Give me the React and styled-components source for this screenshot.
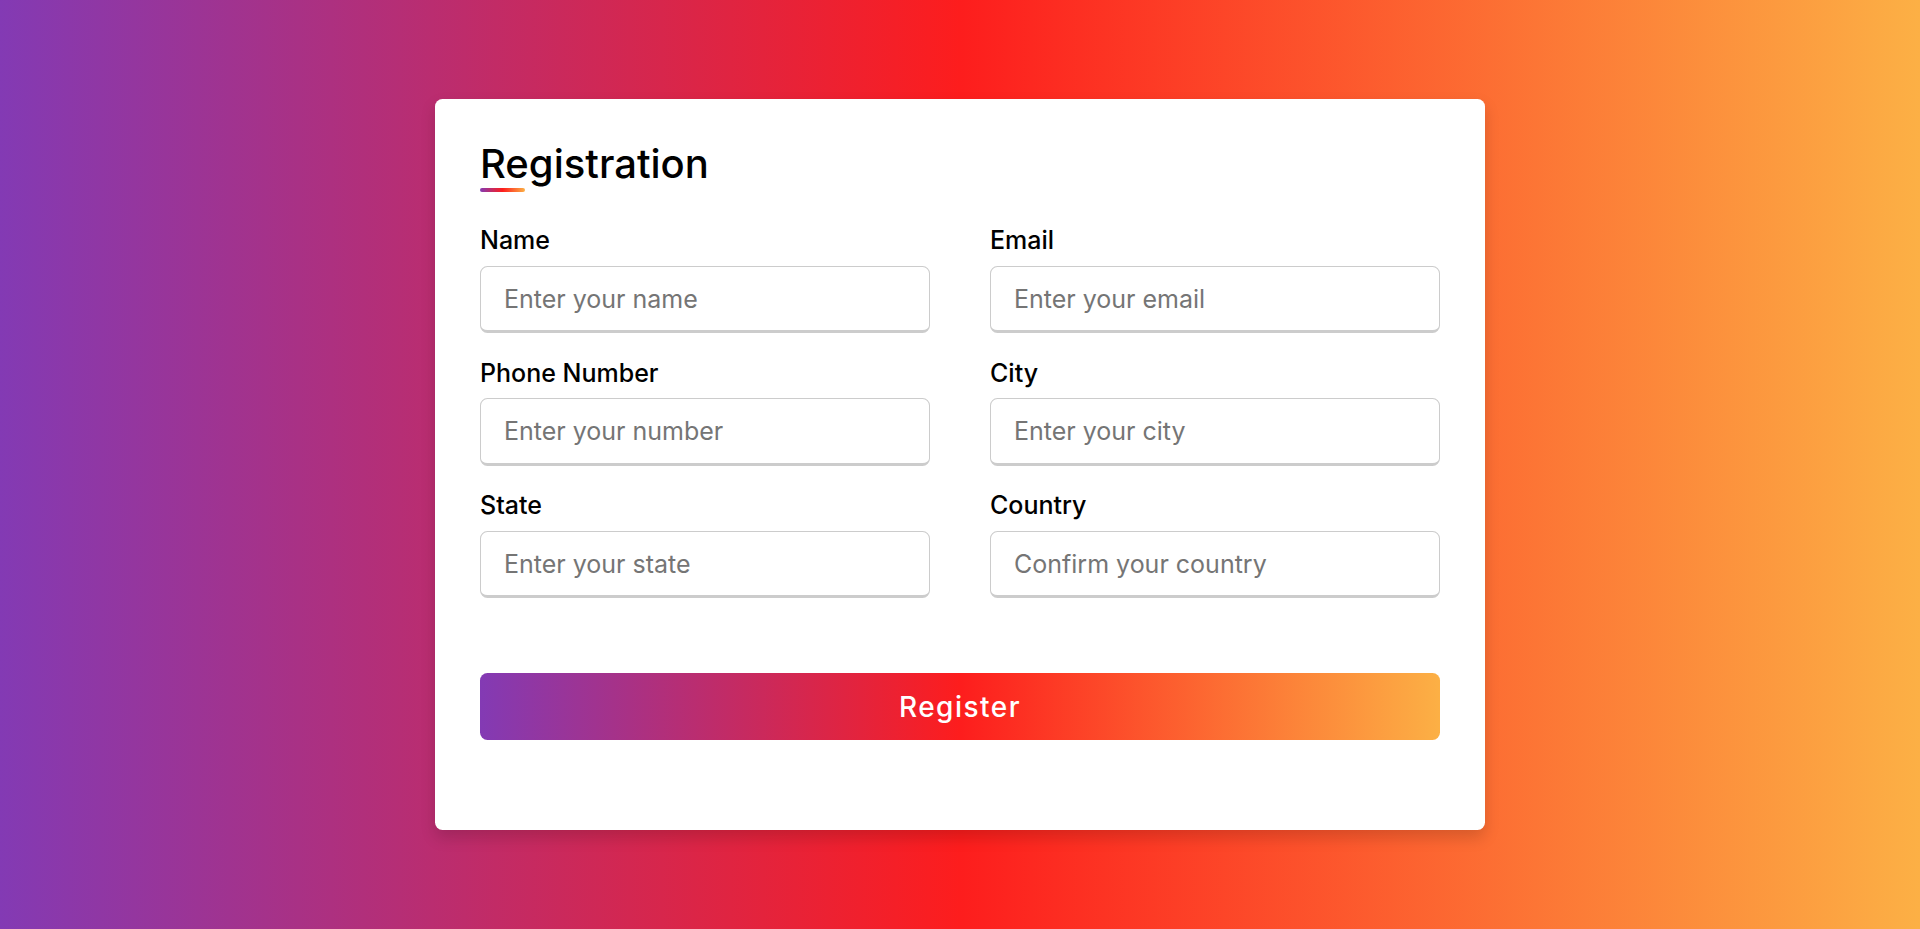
import React from 'react';
import styled, { createGlobalStyle } from 'styled-components';

const brand = 'linear-gradient(90deg, #833ab4, #fd1d1d, #fcb045)';

const GlobalStyle = createGlobalStyle`
  * {
    margin: 0;
    padding: 0;
    box-sizing: border-box;
    font-family: Inter, "Open Sans", sans-serif;
  }
  body {
    height: 100vh;
    display: flex;
    align-items: center;
    justify-content: center;
    background: ${brand};
  }
  #root {
    width: 100%;
    display: flex;
    justify-content: center;
  }
`;

const Container = styled.div`
  max-width: 1050px;
  width: 100%;
  background: #fff;
  padding: 37.5px 45px;
  border-radius: 7.5px;
  box-shadow: 0 7.5px 15px rgba(0, 0, 0, 0.15);
`;

const Title = styled.div`
  position: relative;
  font-size: 40px;
  font-weight: 450;
  line-height: 56px;
  color: #000;

  &::before {
    content: "";
    position: absolute;
    left: 0;
    bottom: 0;
    height: 4.5px;
    width: 45px;
    border-radius: 5px;
    background: ${brand};
  }
`;

const Details = styled.div`
  display: grid;
  grid-template-columns: 1fr 1fr;
  column-gap: 60px;
  row-gap: 21.5px;
  margin-top: 30px;
`;

const Field = styled.label`
  display: flex;
  flex-direction: column;
  gap: 7.5px;
`;

const Caption = styled.span`
  font-size: 25px;
  font-weight: 450;
  line-height: 36px;
  color: #000;
`;

const Input = styled.input`
  height: 67.5px;
  width: 100%;
  outline: none;
  font-size: 25px;
  border-radius: 7.5px;
  padding-left: 23px;
  border: 1px solid #ccc;
  border-bottom-width: 3px;
  color: #333;

  &::placeholder {
    color: #757575;
  }
`;

const Submit = styled.button`
  display: block;
  height: 67.5px;
  width: 100%;
  margin: 74.5px 0 52.5px;
  border: none;
  border-radius: 7.5px;
  color: #fff;
  font-size: 28px;
  font-weight: 500;
  letter-spacing: 1.5px;
  cursor: pointer;
  background: ${brand};
`;

const fields = [
  ['Name', 'Enter your name'],
  ['Email', 'Enter your email'],
  ['Phone Number', 'Enter your number'],
  ['City', 'Enter your city'],
  ['State', 'Enter your state'],
  ['Country', 'Confirm your country'],
];

export default function App() {
  return (
    <>
      <GlobalStyle />
      <Container>
        <Title>Registration</Title>
        <form onSubmit={(e) => e.preventDefault()}>
          <Details>
            {fields.map(([label, hint]) => (
              <Field key={label}>
                <Caption>{label}</Caption>
                <Input type="text" placeholder={hint} />
              </Field>
            ))}
          </Details>
          <Submit type="submit">Register</Submit>
        </form>
      </Container>
    </>
  );
}
